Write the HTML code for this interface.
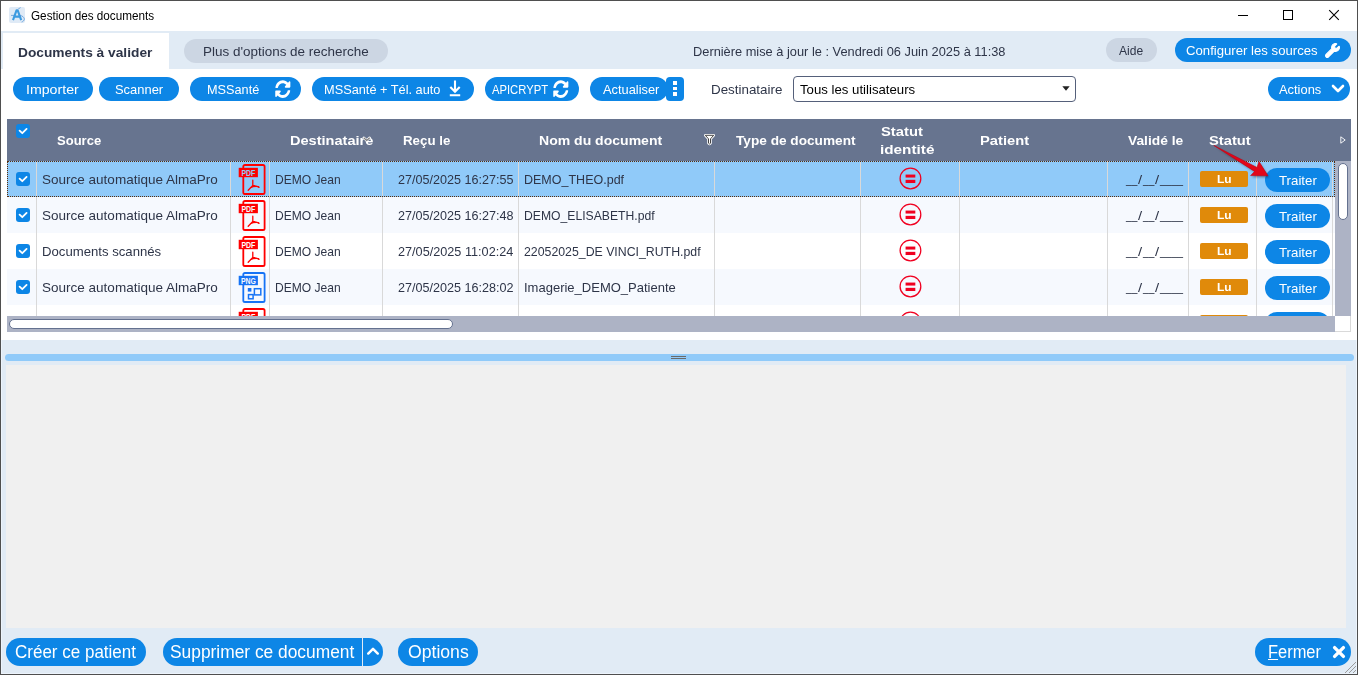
<!DOCTYPE html>
<html lang="fr"><head><meta charset="utf-8"><title>Gestion des documents</title>
<style>
html,body{margin:0;padding:0}
body{width:1358px;height:675px;position:relative;overflow:hidden;background:#fff;font-family:"Liberation Sans",sans-serif;}
.p,.t,.ic,.b{position:absolute}
.t{white-space:pre;display:block}
.t i{font-style:normal;letter-spacing:3.5px}
.b{box-sizing:border-box}
</style></head><body>

<div class="b" style="left:1px;top:31px;width:1356px;height:38px;background:#e1ebf5"></div>
<div class="b" style="left:3px;top:33px;width:166px;height:36px;background:#fff"></div>
<div class="b" style="left:1px;top:340px;width:1356px;height:334px;background:#e1ebf5;border:1px solid #edf4fc;border-top:0"></div>
<div class="b" style="left:6px;top:365px;width:1340px;height:263px;background:#f0f0f0"></div>
<div class="p" style="left:4.5px;top:354px;width:1349px;height:7px;border-radius:3.5px;background:#90caf9;"></div>
<div class="b" style="left:671px;top:356px;width:15px;height:1px;background:#6a6a6a"></div>
<div class="b" style="left:671px;top:358px;width:15px;height:1px;background:#6a6a6a"></div>
<svg class="ic" style="left:9px;top:7px" width="16" height="16" viewBox="0 0 16 16">
<rect width="16" height="16" rx="2" fill="#dfeaf6"/>
<path d="M4 13.2 L7.6 3.2 H8.6 L12.2 13.2 M5.6 9.6 H10.6" fill="none" stroke="#3d9be0" stroke-width="2.1" stroke-linejoin="round"/>
<path d="M2 8.4 H5 M11 8.4 C13.5 8.8 15.2 10.4 15.4 12 C15.3 13.5 14 14.6 12.6 15 M9.2 2 L11.6 .6" fill="none" stroke="#4a90d6" stroke-width=".7"/>
</svg>
<span class="t" style="left:31.00px;top:8.0px;height:16px;line-height:16px;font-size:12px;font-weight:400;color:#000;transform:scaleX(0.9768);transform-origin:0 0;">Gestion des documents</span>
<div class="b" style="left:1238px;top:15px;width:10px;height:1px;background:#000"></div>
<div class="b" style="left:1283px;top:10px;width:10px;height:10px;border:1px solid #000"></div>
<svg class="ic" style="left:1328px;top:9px" width="12" height="12" viewBox="0 0 12 12"><path d="M1.2 1.2 L10.8 10.8 M10.8 1.2 L1.2 10.8" stroke="#000" stroke-width="1.1" fill="none"/></svg>
<span class="t" style="left:18.00px;top:34.5px;height:36px;line-height:36px;font-size:13.5px;font-weight:700;color:#2e3548;transform:scaleX(1.0176);transform-origin:0 0;">Documents à valider</span>
<div class="p" style="left:184px;top:38.5px;width:204px;height:24px;border-radius:12.0px;background:#ccd6e3;"></div>
<span class="t" style="left:203.00px;top:39.5px;height:24px;line-height:24px;font-size:13.5px;font-weight:400;color:#2e3548;transform:scaleX(0.9970);transform-origin:0 0;">Plus d'options de recherche</span>
<span class="t" style="left:693.00px;top:39.5px;height:24px;line-height:24px;font-size:13.5px;font-weight:400;color:#2e3548;transform:scaleX(0.9491);transform-origin:0 0;">Dernière mise à jour le : Vendredi 06 Juin 2025 à 11:38</span>
<div class="p" style="left:1106px;top:38px;width:51px;height:24px;border-radius:12.0px;background:#ccd6e3;"></div>
<span class="t" style="left:1119.00px;top:39.0px;height:24px;line-height:24px;font-size:13.5px;font-weight:400;color:#2e3548;transform:scaleX(0.8919);transform-origin:0 0;">Aide</span>
<div class="p" style="left:1175px;top:38px;width:176px;height:24px;border-radius:12.0px;background:#0d86e6;"></div>
<span class="t" style="left:1186.00px;top:39.0px;height:24px;line-height:24px;font-size:13.5px;font-weight:400;color:#fff;transform:scaleX(0.9746);transform-origin:0 0;">Configurer les sources</span>
<svg class="ic" style="left:1325.4px;top:43.4px" width="15" height="15" viewBox="-20 -20 552 552"><path fill="#fff" stroke="#fff" stroke-width="40" stroke-linejoin="round" d="M507.73 109.1c-2.24-9.03-13.54-12.09-20.12-5.51l-74.36 74.36-67.88-11.31-11.31-67.88 74.36-74.36c6.62-6.62 3.43-17.9-5.66-20.16-47.38-11.74-99.55.91-136.58 37.93-39.64 39.64-50.55 97.1-34.05 147.2L18.74 402.76c-24.99 24.99-24.99 65.51 0 90.5 24.99 24.99 65.51 24.99 90.5 0l213.21-213.21c50.12 16.71 107.47 5.68 147.37-34.22 37.07-37.07 49.7-89.32 37.91-136.73zM64 472c-13.25 0-24-10.75-24-24 0-13.26 10.75-24 24-24s24 10.74 24 24c0 13.25-10.75 24-24 24z"/></svg>
<div class="p" style="left:13px;top:77px;width:80px;height:24px;border-radius:12.0px;background:#0d86e6;"></div>
<span class="t" style="left:26.00px;top:78.0px;height:24px;line-height:24px;font-size:13.5px;font-weight:400;color:#fff;transform:scaleX(1.0492);transform-origin:0 0;">Importer</span>
<div class="p" style="left:99px;top:77px;width:80px;height:24px;border-radius:12.0px;background:#0d86e6;"></div>
<span class="t" style="left:115.00px;top:78.0px;height:24px;line-height:24px;font-size:13.5px;font-weight:400;color:#fff;transform:scaleX(0.9572);transform-origin:0 0;">Scanner</span>
<div class="p" style="left:190px;top:77px;width:111px;height:24px;border-radius:12.0px;background:#0d86e6;"></div>
<span class="t" style="left:207.00px;top:78.0px;height:24px;line-height:24px;font-size:13.5px;font-weight:400;color:#fff;transform:scaleX(0.9407);transform-origin:0 0;">MSSanté</span>
<svg class="ic" style="left:275.26px;top:79.9px" width="15.6" height="18.2" viewBox="0 0 512 512" preserveAspectRatio="none"><path fill="#fff" d="M370.72 133.28C339.458 104.008 298.888 87.962 255.848 88c-77.458.068-144.328 53.178-162.791 126.85-1.344 5.363-6.122 9.15-11.651 9.15H24.103c-7.498 0-13.194-6.807-11.807-14.176C33.933 94.924 134.813 8 256 8c66.448 0 126.791 26.136 171.315 68.685L463.03 40.97C478.149 25.851 504 36.559 504 57.941V192c0 13.255-10.745 24-24 24H345.941c-21.382 0-32.09-25.851-16.971-40.971l41.75-41.749zM32 296h134.059c21.382 0 32.09 25.851 16.971 40.971l-41.75 41.75c31.262 29.273 71.835 45.319 114.876 45.28 77.418-.07 144.315-53.144 162.787-126.849 1.344-5.363 6.122-9.15 11.651-9.15h57.304c7.498 0 13.194 6.807 11.807 14.176C478.067 417.076 377.187 504 256 504c-66.448 0-126.791-26.136-171.315-68.685L48.97 471.03C33.851 486.149 8 475.441 8 454.059V320c0-13.255 10.745-24 24-24z"/></svg>
<div class="p" style="left:312px;top:77px;width:162px;height:24px;border-radius:12.0px;background:#0d86e6;"></div>
<span class="t" style="left:324.00px;top:78.0px;height:24px;line-height:24px;font-size:13.5px;font-weight:400;color:#fff;transform:scaleX(0.9451);transform-origin:0 0;">MSSanté + Tél. auto</span>
<svg class="ic" style="left:449px;top:80px" width="12" height="17" viewBox="0 0 12 17"><path d="M6 0.5 V11.5 M1.3 7 L6 11.8 L10.7 7 M0.8 15.3 H11.2" fill="none" stroke="#fff" stroke-width="2.1"/></svg>
<div class="p" style="left:485px;top:77px;width:94px;height:24px;border-radius:12.0px;background:#0d86e6;"></div>
<span class="t" style="left:492.00px;top:78.0px;height:24px;line-height:24px;font-size:13.5px;font-weight:400;color:#fff;transform:scaleX(0.8329);transform-origin:0 0;">APICRYPT</span>
<svg class="ic" style="left:553.3px;top:79.9px" width="15.6" height="18.2" viewBox="0 0 512 512" preserveAspectRatio="none"><path fill="#fff" d="M370.72 133.28C339.458 104.008 298.888 87.962 255.848 88c-77.458.068-144.328 53.178-162.791 126.85-1.344 5.363-6.122 9.15-11.651 9.15H24.103c-7.498 0-13.194-6.807-11.807-14.176C33.933 94.924 134.813 8 256 8c66.448 0 126.791 26.136 171.315 68.685L463.03 40.97C478.149 25.851 504 36.559 504 57.941V192c0 13.255-10.745 24-24 24H345.941c-21.382 0-32.09-25.851-16.971-40.971l41.75-41.749zM32 296h134.059c21.382 0 32.09 25.851 16.971 40.971l-41.75 41.75c31.262 29.273 71.835 45.319 114.876 45.28 77.418-.07 144.315-53.144 162.787-126.849 1.344-5.363 6.122-9.15 11.651-9.15h57.304c7.498 0 13.194 6.807 11.807 14.176C478.067 417.076 377.187 504 256 504c-66.448 0-126.791-26.136-171.315-68.685L48.97 471.03C33.851 486.149 8 475.441 8 454.059V320c0-13.255 10.745-24 24-24z"/></svg>
<div class="p" style="left:590px;top:77px;width:78px;height:24px;border-radius:12.0px;background:#0d86e6;"></div>
<span class="t" style="left:603.00px;top:78.0px;height:24px;line-height:24px;font-size:13.5px;font-weight:400;color:#fff;transform:scaleX(0.9509);transform-origin:0 0;">Actualiser</span>
<div class="p" style="left:666px;top:77px;width:18px;height:24px;border-radius:4px;background:#0d86e6;"></div>
<div class="b" style="left:672.7px;top:81.4px;width:4.3px;height:3.5px;background:#fff"></div>
<div class="b" style="left:672.7px;top:86.8px;width:4.3px;height:3.5px;background:#fff"></div>
<div class="b" style="left:672.7px;top:92.2px;width:4.3px;height:3.5px;background:#fff"></div>
<span class="t" style="left:711.00px;top:78.0px;height:24px;line-height:24px;font-size:13.5px;font-weight:400;color:#2e3548;transform:scaleX(0.9901);transform-origin:0 0;">Destinataire</span>
<div class="b" style="left:793px;top:76px;width:283px;height:26px;border:1px solid #55607a;border-radius:4px;background:#fff"></div>
<span class="t" style="left:800.00px;top:78.0px;height:24px;line-height:24px;font-size:13.5px;font-weight:400;color:#000;transform:scaleX(0.9779);transform-origin:0 0;">Tous les utilisateurs</span>
<svg class="ic" style="left:1062px;top:86px" width="8" height="5" viewBox="0 0 8 5"><path d="M0.3 0.3 H7.7 L4 4.7 Z" fill="#222"/></svg>
<div class="p" style="left:1268px;top:77px;width:82px;height:24px;border-radius:12.0px;background:#0d86e6;"></div>
<span class="t" style="left:1279.00px;top:78.0px;height:24px;line-height:24px;font-size:13.5px;font-weight:400;color:#fff;transform:scaleX(0.9544);transform-origin:0 0;">Actions</span>
<svg class="ic" style="left:1331px;top:84px" width="14" height="10" viewBox="0 0 14 10"><path d="M2 2 L7 7 L12 2" fill="none" stroke="#fff" stroke-width="2.6" stroke-linecap="round" stroke-linejoin="round"/></svg>
<div class="b" style="left:7px;top:119px;width:1344px;height:213px;background:#adb3c5;overflow:hidden">
<div class="b" style="left:0;top:0;width:1344px;height:42px;background:#67748f"></div>
<div class="b" style="left:0;top:42px;width:1328px;height:36px;background:#90caf9"></div>
<div class="b" style="left:0;top:78px;width:1328px;height:36px;background:#f6f9fe"></div>
<div class="b" style="left:0;top:114px;width:1328px;height:36px;background:#fff"></div>
<div class="b" style="left:0;top:150px;width:1328px;height:36px;background:#f6f9fe"></div>
<div class="b" style="left:0;top:186px;width:1328px;height:36px;background:#fff"></div>
<div class="b" style="left:29px;top:42px;width:1px;height:155px;background:#d9d9d9"></div>
<div class="b" style="left:223px;top:42px;width:1px;height:155px;background:#d9d9d9"></div>
<div class="b" style="left:262px;top:42px;width:1px;height:155px;background:#d9d9d9"></div>
<div class="b" style="left:375px;top:42px;width:1px;height:155px;background:#d9d9d9"></div>
<div class="b" style="left:511px;top:42px;width:1px;height:155px;background:#d9d9d9"></div>
<div class="b" style="left:707px;top:42px;width:1px;height:155px;background:#d9d9d9"></div>
<div class="b" style="left:853px;top:42px;width:1px;height:155px;background:#d9d9d9"></div>
<div class="b" style="left:952px;top:42px;width:1px;height:155px;background:#d9d9d9"></div>
<div class="b" style="left:1100px;top:42px;width:1px;height:155px;background:#d9d9d9"></div>
<div class="b" style="left:1181px;top:42px;width:1px;height:155px;background:#d9d9d9"></div>
<div class="b" style="left:1249px;top:42px;width:1px;height:155px;background:#d9d9d9"></div>
<div class="b" style="left:1325px;top:42px;width:1px;height:155px;background:#d9d9d9"></div>
<div class="b" style="left:0;top:42px;width:1328px;height:36px;border:1px dotted #5a2d0c"></div>
<div class="b" style="left:0;top:197px;width:1328px;height:16px;background:#adb3c5"></div>
<div class="b" style="left:1328px;top:197px;width:16px;height:16px;background:#fff;border-right:1px solid #d9d9d9;border-bottom:1px solid #d9d9d9"></div>
<div class="b" style="left:2px;top:200px;width:444px;height:10px;background:#fff;border:1px solid #64718f;border-radius:5px"></div>
<div class="b" style="left:1331px;top:44px;width:10px;height:57px;background:#fff;border:1px solid #64718f;border-radius:5px"></div>
</div>
<svg class="ic" style="left:16px;top:124px" width="14" height="14" viewBox="0 0 14 14"><rect width="14" height="14" rx="3" fill="#0d86e6"/><path d="M3.6 6.6 L6.3 9.2 L10.6 4.9" fill="none" stroke="#fff" stroke-width="1.8" stroke-linecap="round" stroke-linejoin="round"/></svg>
<span class="t" style="left:57.00px;top:120.0px;height:42px;line-height:42px;font-size:13.5px;font-weight:700;color:#fff;transform:scaleX(0.9647);transform-origin:0 0;">Source</span>
<span class="t" style="left:290.00px;top:120.0px;height:42px;line-height:42px;font-size:13.5px;font-weight:700;color:#fff;transform:scaleX(1.0789);transform-origin:0 0;">Destinataire</span>
<span class="t" style="left:403.00px;top:120.0px;height:42px;line-height:42px;font-size:13.5px;font-weight:700;color:#fff;transform:scaleX(0.9851);transform-origin:0 0;">Reçu le</span>
<span class="t" style="left:539.00px;top:120.0px;height:42px;line-height:42px;font-size:13.5px;font-weight:700;color:#fff;transform:scaleX(1.0393);transform-origin:0 0;">Nom du document</span>
<span class="t" style="left:736.00px;top:120.0px;height:42px;line-height:42px;font-size:13.5px;font-weight:700;color:#fff;transform:scaleX(1.0110);transform-origin:0 0;">Type de document</span>
<span class="t" style="left:881.00px;top:123.0px;height:18px;line-height:18px;font-size:13.5px;font-weight:700;color:#fff;transform:scaleX(1.0931);transform-origin:0 0;">Statut</span>
<span class="t" style="left:880.00px;top:141.0px;height:18px;line-height:18px;font-size:13.5px;font-weight:700;color:#fff;transform:scaleX(1.1339);transform-origin:0 0;">identité</span>
<span class="t" style="left:980.00px;top:120.0px;height:42px;line-height:42px;font-size:13.5px;font-weight:700;color:#fff;transform:scaleX(1.0909);transform-origin:0 0;">Patient</span>
<span class="t" style="left:1128.00px;top:120.0px;height:42px;line-height:42px;font-size:13.5px;font-weight:700;color:#fff;transform:scaleX(1.0223);transform-origin:0 0;">Validé le</span>
<span class="t" style="left:1209.00px;top:120.0px;height:42px;line-height:42px;font-size:13.5px;font-weight:700;color:#fff;transform:scaleX(1.0905);transform-origin:0 0;">Statut</span>
<svg class="ic" style="left:361px;top:135px" width="12" height="8" viewBox="361 135 12 8"><path d="M363.7 137.7 L366.7 140.5 L369.7 137.7" fill="none" stroke="#fff" stroke-width="2.4" stroke-linecap="round" stroke-linejoin="round"/><path d="M363.7 137.7 L366.7 140.5 L369.7 137.7" fill="none" stroke="#808080" stroke-width="1.2" stroke-linejoin="round"/></svg>
<svg class="ic" style="left:702px;top:132px" width="15" height="15" viewBox="702 132 15 15"><path d="M705.3 135.3 H713.7 L710.5 138.9 V143.2 L709.5 144 L708.5 143.2 V138.9 Z" fill="#fff" stroke="#fff" stroke-width="2.6" stroke-linejoin="round"/><path d="M705.3 135.3 H713.7 L710.5 138.9 V143.2 L709.5 144 L708.5 143.2 V138.9 Z" fill="none" stroke="#444" stroke-width="1" stroke-linejoin="round"/></svg>
<svg class="ic" style="left:1339.5px;top:136px" width="6" height="8" viewBox="0 0 6 8"><path d="M0.8 0.8 L5.2 4 L0.8 7.2 Z" fill="none" stroke="#fff" stroke-width=".9"/></svg>
<svg class="ic" style="left:16px;top:172px" width="14" height="14" viewBox="0 0 14 14"><rect width="14" height="14" rx="3" fill="#0d86e6"/><path d="M3.6 6.6 L6.3 9.2 L10.6 4.9" fill="none" stroke="#fff" stroke-width="1.8" stroke-linecap="round" stroke-linejoin="round"/></svg>
<span class="t" style="left:42.00px;top:162.0px;height:36px;line-height:36px;font-size:13.5px;font-weight:400;color:#2e3548;transform:scaleX(1.0012);transform-origin:0 0;">Source automatique AlmaPro</span>
<svg class="ic" style="left:238px;top:163.6px" width="28" height="31" viewBox="0 0 28 31"><rect x="5.3" y="1" width="21.3" height="29" rx="1.6" fill="none" stroke="#f00" stroke-width="1.8"/><rect x="0.7" y="3.8" width="19.2" height="9.4" fill="#f00"/><text x="3.4" y="11.5" font-family="Liberation Sans, sans-serif" font-weight="700" font-size="8.6" textLength="14" lengthAdjust="spacingAndGlyphs" fill="#90caf9">PDF</text><path d="M14.8 16.2 V21.4 L10.2 26.2 M14.8 21.4 C17 21.8 19.5 22.4 21 23.4 M12.6 23.6 C14.6 22.6 17.4 22.2 20.6 22.6" fill="none" stroke="#f00" stroke-width="1.3" stroke-linecap="round"/></svg>
<span class="t" style="left:275.00px;top:162.0px;height:36px;line-height:36px;font-size:13.5px;font-weight:400;color:#2e3548;transform:scaleX(0.8931);transform-origin:0 0;">DEMO Jean</span>
<span class="t" style="left:398.00px;top:162.0px;height:36px;line-height:36px;font-size:13.5px;font-weight:400;color:#2e3548;transform:scaleX(0.9330);transform-origin:0 0;">27/05/2025 16:27:55</span>
<span class="t" style="left:524.00px;top:162.0px;height:36px;line-height:36px;font-size:13.5px;font-weight:400;color:#2e3548;transform:scaleX(0.9262);transform-origin:0 0;">DEMO_THEO.pdf</span>
<svg class="ic" style="left:899.4px;top:167.2px" width="22.9" height="22.9" viewBox="0 0 23 23"><circle cx="11.5" cy="11.5" r="10.4" fill="none" stroke="#f00020" stroke-width="1.3"/><rect x="6.6" y="7.6" width="9.8" height="3" fill="#f00020"/><rect x="6.6" y="12.9" width="9.8" height="3.2" fill="#f00020"/></svg>
<span class="t" style="left:1126.30px;top:161.0px;height:36px;line-height:36px;font-size:13.5px;font-weight:400;color:#2e3548;transform:scaleX(0.7533);transform-origin:0 0;">__</span>
<span class="t" style="left:1138.10px;top:162.0px;height:36px;line-height:36px;font-size:13.5px;font-weight:400;color:#2e3548;transform:scaleX(1.1000);transform-origin:0 0;">/</span>
<span class="t" style="left:1143.20px;top:161.0px;height:36px;line-height:36px;font-size:13.5px;font-weight:400;color:#2e3548;transform:scaleX(0.7533);transform-origin:0 0;">__</span>
<span class="t" style="left:1155.10px;top:162.0px;height:36px;line-height:36px;font-size:13.5px;font-weight:400;color:#2e3548;transform:scaleX(1.1000);transform-origin:0 0;">/</span>
<span class="t" style="left:1160.40px;top:161.0px;height:36px;line-height:36px;font-size:13.5px;font-weight:400;color:#2e3548;transform:scaleX(0.7667);transform-origin:0 0;">____</span>
<div class="p" style="left:1200px;top:171px;width:48px;height:16px;border-radius:2px;background:#e08a0a;"></div>
<span class="t" style="left:1217.00px;top:170.9px;height:16px;line-height:16px;font-size:11.8px;font-weight:700;color:#fff;transform:scaleX(1.0146);transform-origin:0 0;">Lu</span>
<div class="p" style="left:1265px;top:168px;width:65px;height:24px;border-radius:12.0px;background:#0d86e6;"></div>
<span class="t" style="left:1279.00px;top:169.0px;height:24px;line-height:24px;font-size:13.5px;font-weight:400;color:#fff;transform:scaleX(0.9820);transform-origin:0 0;">Traiter</span>
<svg class="ic" style="left:16px;top:208px" width="14" height="14" viewBox="0 0 14 14"><rect width="14" height="14" rx="3" fill="#0d86e6"/><path d="M3.6 6.6 L6.3 9.2 L10.6 4.9" fill="none" stroke="#fff" stroke-width="1.8" stroke-linecap="round" stroke-linejoin="round"/></svg>
<span class="t" style="left:42.00px;top:198.0px;height:36px;line-height:36px;font-size:13.5px;font-weight:400;color:#2e3548;transform:scaleX(1.0012);transform-origin:0 0;">Source automatique AlmaPro</span>
<svg class="ic" style="left:238px;top:199.6px" width="28" height="31" viewBox="0 0 28 31"><rect x="5.3" y="1" width="21.3" height="29" rx="1.6" fill="none" stroke="#f00" stroke-width="1.8"/><rect x="0.7" y="3.8" width="19.2" height="9.4" fill="#f00"/><text x="3.4" y="11.5" font-family="Liberation Sans, sans-serif" font-weight="700" font-size="8.6" textLength="14" lengthAdjust="spacingAndGlyphs" fill="#f6f9fe">PDF</text><path d="M14.8 16.2 V21.4 L10.2 26.2 M14.8 21.4 C17 21.8 19.5 22.4 21 23.4 M12.6 23.6 C14.6 22.6 17.4 22.2 20.6 22.6" fill="none" stroke="#f00" stroke-width="1.3" stroke-linecap="round"/></svg>
<span class="t" style="left:275.00px;top:198.0px;height:36px;line-height:36px;font-size:13.5px;font-weight:400;color:#2e3548;transform:scaleX(0.8931);transform-origin:0 0;">DEMO Jean</span>
<span class="t" style="left:398.00px;top:198.0px;height:36px;line-height:36px;font-size:13.5px;font-weight:400;color:#2e3548;transform:scaleX(0.9330);transform-origin:0 0;">27/05/2025 16:27:48</span>
<span class="t" style="left:524.00px;top:198.0px;height:36px;line-height:36px;font-size:13.5px;font-weight:400;color:#2e3548;transform:scaleX(0.9021);transform-origin:0 0;">DEMO_ELISABETH.pdf</span>
<svg class="ic" style="left:899.4px;top:203.2px" width="22.9" height="22.9" viewBox="0 0 23 23"><circle cx="11.5" cy="11.5" r="10.4" fill="none" stroke="#f00020" stroke-width="1.3"/><rect x="6.6" y="7.6" width="9.8" height="3" fill="#f00020"/><rect x="6.6" y="12.9" width="9.8" height="3.2" fill="#f00020"/></svg>
<span class="t" style="left:1126.30px;top:197.0px;height:36px;line-height:36px;font-size:13.5px;font-weight:400;color:#2e3548;transform:scaleX(0.7533);transform-origin:0 0;">__</span>
<span class="t" style="left:1138.10px;top:198.0px;height:36px;line-height:36px;font-size:13.5px;font-weight:400;color:#2e3548;transform:scaleX(1.1000);transform-origin:0 0;">/</span>
<span class="t" style="left:1143.20px;top:197.0px;height:36px;line-height:36px;font-size:13.5px;font-weight:400;color:#2e3548;transform:scaleX(0.7533);transform-origin:0 0;">__</span>
<span class="t" style="left:1155.10px;top:198.0px;height:36px;line-height:36px;font-size:13.5px;font-weight:400;color:#2e3548;transform:scaleX(1.1000);transform-origin:0 0;">/</span>
<span class="t" style="left:1160.40px;top:197.0px;height:36px;line-height:36px;font-size:13.5px;font-weight:400;color:#2e3548;transform:scaleX(0.7667);transform-origin:0 0;">____</span>
<div class="p" style="left:1200px;top:207px;width:48px;height:16px;border-radius:2px;background:#e08a0a;"></div>
<span class="t" style="left:1217.00px;top:206.9px;height:16px;line-height:16px;font-size:11.8px;font-weight:700;color:#fff;transform:scaleX(1.0146);transform-origin:0 0;">Lu</span>
<div class="p" style="left:1265px;top:204px;width:65px;height:24px;border-radius:12.0px;background:#0d86e6;"></div>
<span class="t" style="left:1279.00px;top:205.0px;height:24px;line-height:24px;font-size:13.5px;font-weight:400;color:#fff;transform:scaleX(0.9820);transform-origin:0 0;">Traiter</span>
<svg class="ic" style="left:16px;top:244px" width="14" height="14" viewBox="0 0 14 14"><rect width="14" height="14" rx="3" fill="#0d86e6"/><path d="M3.6 6.6 L6.3 9.2 L10.6 4.9" fill="none" stroke="#fff" stroke-width="1.8" stroke-linecap="round" stroke-linejoin="round"/></svg>
<span class="t" style="left:42.00px;top:234.0px;height:36px;line-height:36px;font-size:13.5px;font-weight:400;color:#2e3548;transform:scaleX(0.9744);transform-origin:0 0;">Documents scannés</span>
<svg class="ic" style="left:238px;top:235.6px" width="28" height="31" viewBox="0 0 28 31"><rect x="5.3" y="1" width="21.3" height="29" rx="1.6" fill="none" stroke="#f00" stroke-width="1.8"/><rect x="0.7" y="3.8" width="19.2" height="9.4" fill="#f00"/><text x="3.4" y="11.5" font-family="Liberation Sans, sans-serif" font-weight="700" font-size="8.6" textLength="14" lengthAdjust="spacingAndGlyphs" fill="#fff">PDF</text><path d="M14.8 16.2 V21.4 L10.2 26.2 M14.8 21.4 C17 21.8 19.5 22.4 21 23.4 M12.6 23.6 C14.6 22.6 17.4 22.2 20.6 22.6" fill="none" stroke="#f00" stroke-width="1.3" stroke-linecap="round"/></svg>
<span class="t" style="left:275.00px;top:234.0px;height:36px;line-height:36px;font-size:13.5px;font-weight:400;color:#2e3548;transform:scaleX(0.8931);transform-origin:0 0;">DEMO Jean</span>
<span class="t" style="left:398.00px;top:234.0px;height:36px;line-height:36px;font-size:13.5px;font-weight:400;color:#2e3548;transform:scaleX(0.9385);transform-origin:0 0;">27/05/2025 11:02:24</span>
<span class="t" style="left:524.00px;top:234.0px;height:36px;line-height:36px;font-size:13.5px;font-weight:400;color:#2e3548;transform:scaleX(0.9120);transform-origin:0 0;">22052025_DE VINCI_RUTH.pdf</span>
<svg class="ic" style="left:899.4px;top:239.2px" width="22.9" height="22.9" viewBox="0 0 23 23"><circle cx="11.5" cy="11.5" r="10.4" fill="none" stroke="#f00020" stroke-width="1.3"/><rect x="6.6" y="7.6" width="9.8" height="3" fill="#f00020"/><rect x="6.6" y="12.9" width="9.8" height="3.2" fill="#f00020"/></svg>
<span class="t" style="left:1126.30px;top:233.0px;height:36px;line-height:36px;font-size:13.5px;font-weight:400;color:#2e3548;transform:scaleX(0.7533);transform-origin:0 0;">__</span>
<span class="t" style="left:1138.10px;top:234.0px;height:36px;line-height:36px;font-size:13.5px;font-weight:400;color:#2e3548;transform:scaleX(1.1000);transform-origin:0 0;">/</span>
<span class="t" style="left:1143.20px;top:233.0px;height:36px;line-height:36px;font-size:13.5px;font-weight:400;color:#2e3548;transform:scaleX(0.7533);transform-origin:0 0;">__</span>
<span class="t" style="left:1155.10px;top:234.0px;height:36px;line-height:36px;font-size:13.5px;font-weight:400;color:#2e3548;transform:scaleX(1.1000);transform-origin:0 0;">/</span>
<span class="t" style="left:1160.40px;top:233.0px;height:36px;line-height:36px;font-size:13.5px;font-weight:400;color:#2e3548;transform:scaleX(0.7667);transform-origin:0 0;">____</span>
<div class="p" style="left:1200px;top:243px;width:48px;height:16px;border-radius:2px;background:#e08a0a;"></div>
<span class="t" style="left:1217.00px;top:242.9px;height:16px;line-height:16px;font-size:11.8px;font-weight:700;color:#fff;transform:scaleX(1.0146);transform-origin:0 0;">Lu</span>
<div class="p" style="left:1265px;top:240px;width:65px;height:24px;border-radius:12.0px;background:#0d86e6;"></div>
<span class="t" style="left:1279.00px;top:241.0px;height:24px;line-height:24px;font-size:13.5px;font-weight:400;color:#fff;transform:scaleX(0.9820);transform-origin:0 0;">Traiter</span>
<svg class="ic" style="left:16px;top:280px" width="14" height="14" viewBox="0 0 14 14"><rect width="14" height="14" rx="3" fill="#0d86e6"/><path d="M3.6 6.6 L6.3 9.2 L10.6 4.9" fill="none" stroke="#fff" stroke-width="1.8" stroke-linecap="round" stroke-linejoin="round"/></svg>
<span class="t" style="left:42.00px;top:270.0px;height:36px;line-height:36px;font-size:13.5px;font-weight:400;color:#2e3548;transform:scaleX(1.0012);transform-origin:0 0;">Source automatique AlmaPro</span>
<svg class="ic" style="left:238px;top:271.6px" width="28" height="31" viewBox="0 0 28 31"><rect x="5.3" y="1" width="21.3" height="29" rx="1.6" fill="none" stroke="#1673f5" stroke-width="1.8"/><rect x="0.7" y="3.8" width="19.2" height="9.4" fill="#1673f5"/><text x="3" y="11.5" font-family="Liberation Sans, sans-serif" font-weight="700" font-size="8.6" textLength="15" lengthAdjust="spacingAndGlyphs" fill="#f6f9fe">PNG</text><rect x="9.8" y="16" width="3.6" height="3.6" fill="#1673f5"/><rect x="16.4" y="16.7" width="6.4" height="6.2" fill="none" stroke="#1673f5" stroke-width="1.5"/><rect x="10.5" y="22.6" width="4.6" height="4.2" fill="none" stroke="#1673f5" stroke-width="1.5"/></svg>
<span class="t" style="left:275.00px;top:270.0px;height:36px;line-height:36px;font-size:13.5px;font-weight:400;color:#2e3548;transform:scaleX(0.8931);transform-origin:0 0;">DEMO Jean</span>
<span class="t" style="left:398.00px;top:270.0px;height:36px;line-height:36px;font-size:13.5px;font-weight:400;color:#2e3548;transform:scaleX(0.9330);transform-origin:0 0;">27/05/2025 16:28:02</span>
<span class="t" style="left:524.00px;top:270.0px;height:36px;line-height:36px;font-size:13.5px;font-weight:400;color:#2e3548;transform:scaleX(0.9634);transform-origin:0 0;">Imagerie_DEMO_Patiente</span>
<svg class="ic" style="left:899.4px;top:275.2px" width="22.9" height="22.9" viewBox="0 0 23 23"><circle cx="11.5" cy="11.5" r="10.4" fill="none" stroke="#f00020" stroke-width="1.3"/><rect x="6.6" y="7.6" width="9.8" height="3" fill="#f00020"/><rect x="6.6" y="12.9" width="9.8" height="3.2" fill="#f00020"/></svg>
<span class="t" style="left:1126.30px;top:269.0px;height:36px;line-height:36px;font-size:13.5px;font-weight:400;color:#2e3548;transform:scaleX(0.7533);transform-origin:0 0;">__</span>
<span class="t" style="left:1138.10px;top:270.0px;height:36px;line-height:36px;font-size:13.5px;font-weight:400;color:#2e3548;transform:scaleX(1.1000);transform-origin:0 0;">/</span>
<span class="t" style="left:1143.20px;top:269.0px;height:36px;line-height:36px;font-size:13.5px;font-weight:400;color:#2e3548;transform:scaleX(0.7533);transform-origin:0 0;">__</span>
<span class="t" style="left:1155.10px;top:270.0px;height:36px;line-height:36px;font-size:13.5px;font-weight:400;color:#2e3548;transform:scaleX(1.1000);transform-origin:0 0;">/</span>
<span class="t" style="left:1160.40px;top:269.0px;height:36px;line-height:36px;font-size:13.5px;font-weight:400;color:#2e3548;transform:scaleX(0.7667);transform-origin:0 0;">____</span>
<div class="p" style="left:1200px;top:279px;width:48px;height:16px;border-radius:2px;background:#e08a0a;"></div>
<span class="t" style="left:1217.00px;top:278.9px;height:16px;line-height:16px;font-size:11.8px;font-weight:700;color:#fff;transform:scaleX(1.0146);transform-origin:0 0;">Lu</span>
<div class="p" style="left:1265px;top:276px;width:65px;height:24px;border-radius:12.0px;background:#0d86e6;"></div>
<span class="t" style="left:1279.00px;top:277.0px;height:24px;line-height:24px;font-size:13.5px;font-weight:400;color:#fff;transform:scaleX(0.9820);transform-origin:0 0;">Traiter</span>
<div class="b" style="left:7px;top:305px;width:1328px;height:11px;overflow:hidden">
<svg class="ic" style="left:231px;top:2.6px" width="28" height="31" viewBox="0 0 28 31"><rect x="5.3" y="1" width="21.3" height="29" rx="1.6" fill="none" stroke="#f00" stroke-width="1.8"/><rect x="0.7" y="3.8" width="19.2" height="9.4" fill="#f00"/><text x="3.4" y="11.5" font-family="Liberation Sans, sans-serif" font-weight="700" font-size="8.6" textLength="14" lengthAdjust="spacingAndGlyphs" fill="#fff">PDF</text><path d="M14.8 16.2 V21.4 L10.2 26.2 M14.8 21.4 C17 21.8 19.5 22.4 21 23.4 M12.6 23.6 C14.6 22.6 17.4 22.2 20.6 22.6" fill="none" stroke="#f00" stroke-width="1.3" stroke-linecap="round"/></svg>
<svg class="ic" style="left:892.4px;top:6.2px" width="22.9" height="22.9" viewBox="0 0 23 23"><circle cx="11.5" cy="11.5" r="10.4" fill="none" stroke="#f00020" stroke-width="1.3"/><rect x="6.6" y="7.6" width="9.8" height="3" fill="#f00020"/><rect x="6.6" y="12.9" width="9.8" height="3.2" fill="#f00020"/></svg>
<div class="p" style="left:1193px;top:10px;width:48px;height:16px;border-radius:2px;background:#e08a0a;"></div>
<div class="p" style="left:1258px;top:7px;width:65px;height:24px;border-radius:12.0px;background:#0d86e6;"></div>
</div>
<svg class="ic" style="left:1205px;top:138px" width="70" height="46" viewBox="1205 138 70 46"><defs><filter id="sh" x="-20%" y="-20%" width="150%" height="150%"><feGaussianBlur stdDeviation="1"/></filter></defs><path d="M1213.8 145.4 L1257 167.5 L1259 161.6 L1268 175.8 L1250.6 175.6 L1254.6 171.4 Z" transform="translate(1.2 1.6)" fill="rgba(0,0,0,.35)" filter="url(#sh)"/><path d="M1213.8 145.4 L1257 167.5 L1259 161.6 L1268 175.8 L1250.6 175.6 L1254.6 171.4 Z" fill="#e2061a" stroke="#c40010" stroke-width=".6" stroke-linejoin="round"/></svg>
<div class="p" style="left:6px;top:638px;width:140px;height:28px;border-radius:14.0px;background:#0d86e6;"></div>
<span class="t" style="left:15.00px;top:637.8px;height:28px;line-height:28px;font-size:17.5px;font-weight:400;color:#fff;transform:scaleX(0.9718);transform-origin:0 0;">Créer ce patient</span>
<div class="p" style="left:163px;top:638px;width:220px;height:28px;border-radius:14.0px;background:#0d86e6;"></div>
<span class="t" style="left:170.00px;top:637.8px;height:28px;line-height:28px;font-size:17.5px;font-weight:400;color:#fff;transform:scaleX(0.9919);transform-origin:0 0;">Supprimer ce document</span>
<div class="b" style="left:362px;top:638px;width:1px;height:28px;background:#e1ebf5"></div>
<svg class="ic" style="left:366px;top:646px" width="14" height="10" viewBox="0 0 14 10"><path d="M2.2 7.6 L7 2.8 L11.8 7.6" fill="none" stroke="#fff" stroke-width="2.4" stroke-linecap="round" stroke-linejoin="round"/></svg>
<div class="p" style="left:398px;top:638px;width:80px;height:28px;border-radius:14.0px;background:#0d86e6;"></div>
<span class="t" style="left:408.00px;top:637.8px;height:28px;line-height:28px;font-size:17.5px;font-weight:400;color:#fff;transform:scaleX(1.0068);transform-origin:0 0;">Options</span>
<div class="p" style="left:1255px;top:638px;width:96px;height:28px;border-radius:14.0px;background:#0d86e6;"></div>
<span class="t" style="left:1268.00px;top:637.8px;height:28px;line-height:28px;font-size:17.5px;font-weight:400;color:#fff;transform:scaleX(0.9394);transform-origin:0 0;"><u>F</u>ermer</span>
<svg class="ic" style="left:1332px;top:645px" width="14" height="14" viewBox="0 0 14 14"><path d="M2.6 2.6 L11.4 11.4 M11.4 2.6 L2.6 11.4" stroke="#fff" stroke-width="3.4" stroke-linecap="round" fill="none"/></svg>
<svg class="ic" style="left:1343px;top:660px" width="14" height="14" viewBox="0 0 14 14"><path d="M2 13 L13 2 M6 13 L13 6 M10 13 L13 10" stroke="#9a9a9a" stroke-width="1" fill="none"/></svg>
<div class="b" style="left:0;top:0;width:1358px;height:675px;border:1px solid #4f4f4f;pointer-events:none"></div>
</body></html>
